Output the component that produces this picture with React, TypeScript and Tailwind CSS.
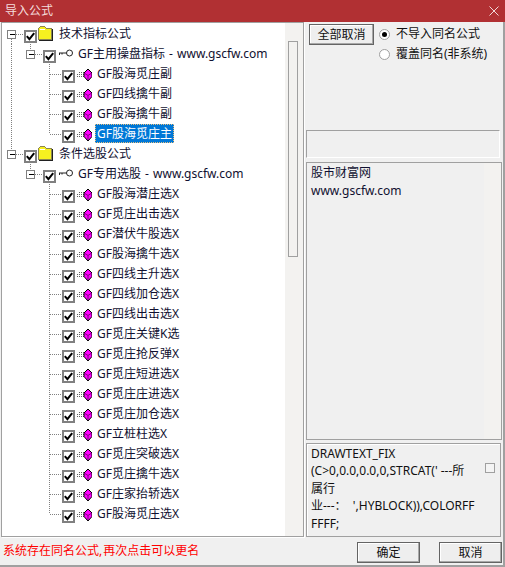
const FONT = 'font-["Noto_Sans","Noto_Sans_CJK_SC",sans-serif]';

type Row = {
  level: 0 | 1 | 2;
  label: string;
  selected?: boolean;
  last?: boolean;
  lastRoot?: boolean;
};

const rows: Row[] = [
  { level: 0, label: '技术指标公式' },
  { level: 1, label: 'GF主用操盘指标 - www.gscfw.com' },
  { level: 2, label: 'GF股海觅庄副' },
  { level: 2, label: 'GF四线擒牛副' },
  { level: 2, label: 'GF股海擒牛副' },
  { level: 2, label: 'GF股海觅庄主', selected: true, last: true },
  { level: 0, label: '条件选股公式', lastRoot: true },
  { level: 1, label: 'GF专用选股 - www.gscfw.com', lastRoot: true },
  ...[
    'GF股海潜庄选X',
    'GF觅庄出击选X',
    'GF潜伏牛股选X',
    'GF股海擒牛选X',
    'GF四线主升选X',
    'GF四线加仓选X',
    'GF四线出击选X',
    'GF觅庄关键K选',
    'GF觅庄抢反弹X',
    'GF觅庄短进选X',
    'GF觅庄庄进选X',
    'GF觅庄加仓选X',
    'GF立桩柱选X',
    'GF觅庄突破选X',
    'GF觅庄擒牛选X',
    'GF庄家抬轿选X',
  ].map((label): Row => ({ level: 2, label, lastRoot: true })),
  { level: 2, label: 'GF股海觅庄选X', last: true, lastRoot: true },
];

const dots = { stroke: '#808080', strokeDasharray: '1 1', shapeRendering: 'crispEdges' as const };

const Expander = ({ x }: { x: number }) => (
  <g shapeRendering="crispEdges">
    <rect x={x} y="6.5" width="8" height="8" fill="#fff" stroke="#808080" />
    <path d={`M${x + 2} 10.5h5`} stroke="#000" />
  </g>
);

// dotted tree lines + the +/- box in front of a row's checkbox
const Guides = ({ row }: { row: Row }) => {
  const width = row.level === 0 ? 22 : row.level === 1 ? 41 : 60;
  return (
    <svg width={width} height="20" viewBox={`2 0 ${width} 20`} className="shrink-0">
      {!row.lastRoot && row.level > 0 && <path d="M11.5 0V20" {...dots} />}
      {row.level === 0 && <path d={row.lastRoot ? 'M11.5 0V6' : 'M11.5 15V20'} {...dots} />}
      {row.level === 0 && <path d="M30.5 19V20" {...dots} />}
      {row.level === 0 && <path d="M16 10.5H24" {...dots} />}
      {row.level === 0 && <Expander x={7.5} />}
      {row.level === 1 && (
        <>
          <path d="M30.5 0V6" {...dots} />
          <path d="M35 10.5H43" {...dots} />
          <path d="M49.5 19V20" {...dots} />
          <Expander x={26.5} />
        </>
      )}
      {row.level === 2 && (
        <>
          <path d={row.last ? 'M49.5 0V10' : 'M49.5 0V20'} {...dots} />
          <path d="M50 10.5H62" {...dots} />
        </>
      )}
    </svg>
  );
};

const Check = () => (
  <div className="mt-[6px] h-[13px] w-[13px] shrink-0 border-2 border-[#808080] bg-white">
    <svg width="9" height="9" viewBox="0 0 9 9">
      <path d="M0.8 4.2L3.4 7.2L8.2 1.2" fill="none" stroke="#000" strokeWidth="2" />
    </svg>
  </div>
);

const Folder = () => (
  <svg width="15" height="15" viewBox="0 0 15 15" className="ml-px mt-[2px] shrink-0" shapeRendering="crispEdges">
    <path d="M0.5 13.5V2.5L2.5 0.5H6.5L8.5 2.5H13.5V13.5Z" fill="#f6f020" stroke="#8c8650" />
    <path d="M1 14.5H14.5V3" fill="none" stroke="#202020" />
    <path d="M1.5 3.5H7" stroke="#fff" />
  </svg>
);

const Key = () => (
  <svg width="16" height="20" viewBox="0 0 16 20" className="ml-[2px] shrink-0">
    <circle cx="11.5" cy="9" r="3" fill="#fff" stroke="#222" strokeWidth="1" />
    <path d="M8.5 9H1M1.5 9V11M4 9V10.5" fill="none" stroke="#222" strokeWidth="1" />
  </svg>
);

const Gem = () => (
  <svg width="15" height="20" viewBox="0 0 15 20" className="ml-[2px] shrink-0">
    <path d="M0 10.5H7M0 12.5H7M2 8.5H7" stroke="#606060" strokeDasharray="1 1" shapeRendering="crispEdges" />
    <path d="M11 5L15 9V12.5L11 17L7 12.5V9Z" fill="#ff00ff" stroke="#000" strokeWidth="1" />
    <path d="M11 11.5V16M8 9.5L11 11.5L14 9.5" fill="none" stroke="#800080" strokeWidth="1" />
  </svg>
);

const TreeRow = ({ row }: { row: Row }) => (
  <div className="flex h-5 items-start">
    <Guides row={row} />
    <Check />
    {row.level === 0 ? <Folder /> : row.level === 1 ? <Key /> : <Gem />}
    <span
      className={`whitespace-pre px-[2px] leading-[19px] [word-spacing:1px] ${
        row.level === 0 ? 'ml-[4px]' : row.level === 1 ? 'ml-[2px]' : 'ml-[3px]'
      } ${row.selected ? 'h-[19px] bg-[#0078d7] text-white outline outline-1 -outline-offset-1 outline-dotted outline-[#e8c080]' : 'text-[#101030]'}`}
    >
      {row.label}
    </span>
  </div>
);

const Radio = ({ on, label }: { on?: boolean; label: string }) => (
  <div className="flex h-5 items-center">
    <div className="flex h-[11px] w-[11px] items-center justify-center rounded-full border border-[#a0a0a0] bg-white">
      {on && <div className="h-[5px] w-[5px] rounded-full bg-black" />}
    </div>
    <span className="ml-[6px] whitespace-pre text-[#101010]">{label}</span>
  </div>
);

const Btn = ({ label, className }: { label: string; className: string }) => (
  <button
    className={`flex items-center justify-center border border-[#646464] bg-[#eeeeee] text-[#101010] shadow-[inset_-1px_-1px_0_#a8a8a8,inset_1px_1px_0_#fff] ${className}`}
  >
    {label}
  </button>
);

export default function App() {
  return (
    <div className={`flex h-[567px] w-[505px] flex-col overflow-hidden bg-[#f0f0f0] text-[12px] ${FONT}`}>
      {/* title bar */}
      <div className="flex h-[22px] shrink-0 items-center justify-between bg-[#b13033] pl-[5px] pr-[6px] text-[#f4dcdc]">
        <span>导入公式</span>
        <svg width="10" height="10" viewBox="0 0 10 10">
          <path d="M0.5 0.5L9.5 9.5M9.5 0.5L0.5 9.5" stroke="#f0d8d8" strokeWidth="1" />
        </svg>
      </div>

      <div className="flex min-h-0 flex-1 flex-col border-b-2 border-r-2 border-[#a0a0a0]">
        <div className="flex h-[515px] shrink-0 pl-px pr-px">
          {/* tree */}
          <div className="flex h-full w-[303px] shrink-0 border border-[#a0a0a0] bg-white shadow-[1px_1px_0_#fff]">
            <div className="w-[283px] shrink-0 overflow-hidden pt-px">
              {rows.map((row, i) => (
                <TreeRow key={i} row={row} />
              ))}
            </div>
            <div className="flex-1 bg-[#f3f2f0] pl-[3px] pt-[18px]">
              <div className="h-[216px] w-[10px] border border-[#a0a0a0] bg-[#f3f2f0]" />
            </div>
          </div>

          {/* right side */}
          <div className="ml-[2px] flex min-w-0 flex-1 flex-col">
            <div className="flex h-[108px] shrink-0 items-start pl-[3px] pt-[2px]">
              <Btn label="全部取消" className="h-[21px] w-[65px]" />
              <div className="ml-[5px] flex flex-col">
                <Radio on label="不导入同名公式" />
                <Radio label="覆盖同名(非系统)" />
              </div>
            </div>
            <div className="mr-[2px] h-[28px] shrink-0 border border-[#a0a0a0] border-b-white border-r-white" />
            <div className="mt-[4px] flex h-[278px] shrink-0 border border-[#a0a0a0]">
              <div className="w-[177px] shrink-0 pl-[4px] pt-px leading-[18px] text-[#101030]">
                <div>股市财富网</div>
                <div>www.gscfw.com</div>
              </div>
              <div className="flex-1 bg-[#f3f2f0]" />
            </div>
            <div className="mt-[3px] mr-px flex min-h-0 flex-1 border border-[#a0a0a0] shadow-[inset_1px_1px_0_#fff]">
              <div className="w-[175px] shrink-0 pl-[4px] pt-px leading-[17.4px] text-[#101010]">
                <div>DRAWTEXT_FIX</div>
                <div>(C&gt;0,0.0,0.0,0,STRCAT(' ---所</div>
                <div>属行</div>
                <div className="whitespace-pre">业---：  ',HYBLOCK)),COLORFF</div>
                <div>FFFF;</div>
              </div>
              <div className="ml-[3px] mt-[19px] h-[10px] w-[10px] border border-[#a0a0a0] bg-[#f4f4f4]" />
            </div>
          </div>
        </div>

        {/* footer */}
        <div className="flex flex-1 items-center pl-[3px] pr-px pt-[3px]">
          <span className="mb-[3px] flex-1 whitespace-pre text-[#ff0000] [word-spacing:-2px]">系统存在同名公式, 再次点击可以更名</span>
          <Btn label="确定" className="h-[21px] w-[63px]" />
          <Btn label="取消" className="ml-[19px] h-[21px] w-[63px]" />
        </div>
      </div>
    </div>
  );
}
